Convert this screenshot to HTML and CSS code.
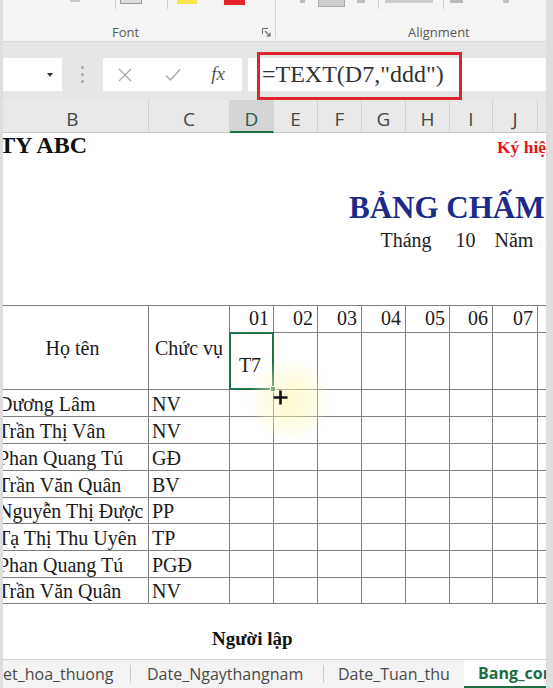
FILE: index.html
```html
<!DOCTYPE html>
<html lang="vi">
<head>
<meta charset="utf-8">
<title>Bang cham cong</title>
<link rel="stylesheet" href="styles.css">
</head>
<body>
<div class="window">
  <div class="ribbon">
    <div class="group font-group">
      <div class="icons">
        <span class="ic ic-a"></span>
        <span class="vsep vs-1"></span>
        <span class="ic ic-box"></span>
        <span class="vsep vs-2"></span>
        <span class="ic ic-yellow"></span>
        <span class="ic ic-red"></span>
      </div>
      <div class="glabel">
        <span class="lbl lbl-font">Font</span>
        <svg class="launcher" width="9" height="9" viewBox="0 0 9 9"><path d="M0.5 6V0.5H6" fill="none" stroke="#6a6a6a" stroke-width="1"/><path d="M3 3L8 8M8 4.5V8H4.5" fill="none" stroke="#6a6a6a" stroke-width="1.1"/></svg>
      </div>
    </div>
    <div class="rsep"></div>
    <div class="group align-group">
      <div class="icons">
        <span class="ic ic-s1"></span>
        <span class="ic ic-pressed"></span>
        <span class="ic ic-s2"></span>
        <span class="vsep vs-3"></span>
        <span class="ic ic-bar"></span>
        <span class="vsep vs-4"></span>
        <span class="ic ic-s3"></span>
        <span class="ic ic-s4"></span>
      </div>
      <div class="glabel">
        <span class="lbl lbl-align">Alignment</span>
      </div>
    </div>
  </div>

  <div class="fbar">
    <div class="namebox"><span class="caret"></span></div>
    <div class="dots"><i></i><i></i><i></i></div>
    <div class="fbtns">
      <span class="fb fb-x"><svg width="14" height="14" viewBox="0 0 14 14"><path d="M1 1L13 13M13 1L1 13" stroke="#a9a9a9" stroke-width="1.3"/></svg></span>
      <span class="fb fb-ok"><svg width="16" height="14" viewBox="0 0 16 14"><path d="M1 7.5L5.5 12L15 1.5" fill="none" stroke="#a9a9a9" stroke-width="1.3"/></svg></span>
      <span class="fb fb-fx">fx</span>
    </div>
    <div class="finput">=TEXT(D7,"ddd")</div>
  </div>

  <div class="colhdr">
    <div class="ch">B</div>
    <div class="ch">C</div>
    <div class="ch ch-sel">D</div>
    <div class="ch">E</div>
    <div class="ch">F</div>
    <div class="ch">G</div>
    <div class="ch">H</div>
    <div class="ch">I</div>
    <div class="ch">J</div>
    <div class="ch">K</div>
  </div>

  <div class="sheet">
    <div class="row r1">
      <div class="company"><span>CÔNG TY ABC</span></div>
      <div class="kyhieu">Ký hiệu chấm công</div>
    </div>
    <div class="r2">BẢNG CHẤM CÔNG</div>
    <div class="row r3">
      <div class="thang">Tháng</div>
      <div class="month">10</div>
      <div class="nam">Năm</div>
    </div>

    <div class="tbl">
      <div class="c hname">Họ tên</div>
      <div class="c hpos">Chức vụ</div>
      <div class="c num">01</div>
      <div class="c num">02</div>
      <div class="c num">03</div>
      <div class="c num">04</div>
      <div class="c num">05</div>
      <div class="c num">06</div>
      <div class="c num">07</div>
      <div class="c num">08</div>
      <div class="c day">T7<span class="sel"><span class="handle"></span></span></div>
      <div class="c"></div><div class="c"></div><div class="c"></div><div class="c"></div><div class="c"></div><div class="c"></div><div class="c"></div>

      <div class="c name">Dương Lâm</div><div class="c pos">NV</div>
      <div class="c"></div><div class="c"></div><div class="c"></div><div class="c"></div><div class="c"></div><div class="c"></div><div class="c"></div><div class="c"></div>

      <div class="c name">Trần Thị Vân</div><div class="c pos">NV</div>
      <div class="c"></div><div class="c"></div><div class="c"></div><div class="c"></div><div class="c"></div><div class="c"></div><div class="c"></div><div class="c"></div>

      <div class="c name">Phan Quang Tú</div><div class="c pos">GĐ</div>
      <div class="c"></div><div class="c"></div><div class="c"></div><div class="c"></div><div class="c"></div><div class="c"></div><div class="c"></div><div class="c"></div>

      <div class="c name">Trần Văn Quân</div><div class="c pos">BV</div>
      <div class="c"></div><div class="c"></div><div class="c"></div><div class="c"></div><div class="c"></div><div class="c"></div><div class="c"></div><div class="c"></div>

      <div class="c name">Nguyễn Thị Được</div><div class="c pos">PP</div>
      <div class="c"></div><div class="c"></div><div class="c"></div><div class="c"></div><div class="c"></div><div class="c"></div><div class="c"></div><div class="c"></div>

      <div class="c name">Tạ Thị Thu Uyên</div><div class="c pos">TP</div>
      <div class="c"></div><div class="c"></div><div class="c"></div><div class="c"></div><div class="c"></div><div class="c"></div><div class="c"></div><div class="c"></div>

      <div class="c name">Phan Quang Tú</div><div class="c pos">PGĐ</div>
      <div class="c"></div><div class="c"></div><div class="c"></div><div class="c"></div><div class="c"></div><div class="c"></div><div class="c"></div><div class="c"></div>

      <div class="c name">Trần Văn Quân</div><div class="c pos">NV</div>
      <div class="c"></div><div class="c"></div><div class="c"></div><div class="c"></div><div class="c"></div><div class="c"></div><div class="c"></div><div class="c"></div>
    </div>

    <div class="sign">Người lập</div>
  </div>

  <div class="tabs">
    <div class="tab t1">et_hoa_thuong</div>
    <div class="tsep"></div>
    <div class="tab t2">Date_Ngaythangnam</div>
    <div class="tsep"></div>
    <div class="tab t3">Date_Tuan_thu</div>
    <div class="tab active">Bang_cong</div>
  </div>

  <div class="annot"></div>
  <div class="glow"></div>
  <svg class="cursor" width="15" height="15" viewBox="0 0 15 15"><path d="M6.2 0.5H8.8V6.2H14.5V8.8H8.8V14.5H6.2V8.8H0.5V6.2H6.2Z" fill="#111"/></svg>
</div>
</body>
</html>
```

FILE: styles.css
```css
* { box-sizing: border-box; margin: 0; padding: 0; }

body {
  width: 553px;
  height: 688px;
  overflow: hidden;
  background: #dedede;
  font-family: "Liberation Serif", "Times New Roman", serif;
}

.window {
  position: relative;
  margin-left: 3px;
  width: 543px;
  height: 688px;
  overflow: hidden;
  background: #fff;
  display: flex;
  flex-direction: column;
}

/* ---------- ribbon ---------- */
.ribbon {
  height: 42px;
  flex: none;
  display: flex;
  background: #f4f4f4;
  border-bottom: 1px solid #d9d9d9;
  font-family: "Open Sans", "Noto Sans", sans-serif;
}
.group { position: relative; }
.font-group { width: 272px; }
.align-group { flex: 1; }
.rsep { width: 1px; background: #d3d3d3; margin-bottom: 2px; }

.icons { display: flex; align-items: flex-start; height: 10px; }
.ic { display: block; flex: none; }
.vsep { display: block; flex: none; width: 1px; height: 9px; background: #cfcfcf; }

.ic-a { margin-left: 67px; width: 10px; height: 2px; background: #c9c9c9; }
.vs-1 { margin-left: 35px; }
.ic-box { margin-left: 4px; width: 22px; height: 4px; background: #dcdcdc; border: 1px solid #9c9c9c; border-top: 0; }
.vs-2 { margin-left: 25px; }
.ic-yellow { margin-left: 9px; width: 20px; height: 4px; background: #f4e64b; }
.ic-red { margin-left: 27px; width: 21px; height: 5px; background: #e2262c; }

.ic-s1 { margin-left: 24px; width: 5px; height: 3px; background: #bdbdbd; }
.ic-pressed { margin-left: 13px; width: 27px; height: 7px; background: #cfcfcf; border: 1px solid #a9a9a9; border-top: 0; }
.ic-s2 { margin-left: 12px; width: 8px; height: 3px; background: #bdbdbd; }
.vs-3 { margin-left: 13px; }
.ic-bar { margin-left: 6px; width: 48px; height: 3px; background: #cccccc; }
.vs-4 { margin-left: 10px; }
.ic-s3 { margin-left: 6px; width: 13px; height: 3px; background: #b9b9b9; }
.ic-s4 { margin-left: 40px; width: 6px; height: 3px; background: #c3c3c3; }

.glabel {
  margin-top: 14px;
  height: 16px;
  line-height: 16px;
  display: flex;
  align-items: center;
}
.lbl { font-size: 13px; color: #5a5a5a; white-space: nowrap; }
.lbl-font { margin-left: 109px; }
.launcher { margin-left: 123px; flex: none; }
.lbl-align { margin-left: 132px; }

/* ---------- formula bar ---------- */
.fbar {
  height: 58px;
  flex: none;
  display: flex;
  align-items: flex-start;
  padding-top: 16px;
  background: #e6e6e6;
}
.namebox {
  width: 59px;
  height: 33px;
  background: #fff;
  display: flex;
  align-items: center;
  justify-content: flex-end;
  padding-right: 9px;
}
.caret {
  width: 0; height: 0;
  border-left: 3px solid transparent;
  border-right: 3px solid transparent;
  border-top: 4px solid #333;
}
.dots {
  width: 41px;
  height: 33px;
  padding-left: 19px;
  display: flex;
  flex-direction: column;
  justify-content: center;
  gap: 4px;
}
.dots i { display: block; width: 3px; height: 3px; border-radius: 50%; background: #a8a8a8; }
.fbtns {
  width: 139px;
  height: 33px;
  background: #fff;
  display: flex;
  align-items: center;
}
.fb { display: flex; justify-content: center; align-items: center; height: 33px; }
.fb-x { width: 44px; }
.fb-ok { width: 52px; }
.fb-fx {
  width: 38px;
  font-family: "Liberation Serif", serif;
  font-style: italic;
  font-size: 19px;
  color: #555;
  padding-bottom: 2px;
}
.finput {
  margin-left: 6px;
  flex: 1;
  height: 33px;
  background: #fff;
  padding-left: 14px;
  font-family: "Liberation Serif", serif;
  font-size: 24px;
  line-height: 33px;
  color: #333;
  white-space: nowrap;
}

/* ---------- column header ---------- */
.colhdr, .row, .tbl {
  display: grid;
  grid-template-columns: 152px 81px 44px 44px 44px 44px 44px 43px 45px 44px;
  margin-left: -6px;
}
.colhdr {
  height: 33px;
  flex: none;
  background: #e9e9e9;
  font-family: "Open Sans", "Noto Sans", sans-serif;
  font-size: 19px;
  color: #454545;
}
.ch {
  text-align: center;
  line-height: 24px;
  padding-top: 7px;
  border-right: 1px solid #d2d2d2;
  border-bottom: 1px solid #c6c6c6;
}
.ch-sel {
  background: #d5d5d5;
  color: #2d5b45;
  border-bottom: 2px solid #217346;
}

/* ---------- sheet ---------- */
.sheet {
  flex: 1;
  background: #fff;
  color: #111;
}
.r1 { height: 30px; align-items: start; }
.company {
  grid-column: 1;
  display: flex;
  justify-content: flex-end;
  padding-right: 62px;
  font-weight: bold;
  font-size: 24px;
  line-height: 24px;
  white-space: nowrap;
}
.company span { flex: none; }
.kyhieu {
  grid-column: 9;
  padding-left: 4px;
  font-weight: bold;
  font-size: 17.5px;
  line-height: 28px;
  color: #e4141e;
  white-space: nowrap;
}
.r2 {
  padding-top: 25px;
  padding-left: 346px;
  height: 65px;
  font-weight: bold;
  font-size: 31px;
  line-height: 40px;
  color: #1c2a88;
  white-space: nowrap;
}
.r3 {
  height: 24px;
  font-size: 20px;
  line-height: 24px;
  color: #222;
  white-space: nowrap;
}
.thang { grid-column: 6 / span 2; text-align: center; }
.month { grid-column: 8; text-align: center; padding-right: 12px; }
.nam { grid-column: 9; text-align: center; padding-right: 3px; }

/* ---------- table ---------- */
.tbl {
  margin-top: 53px;
  grid-template-rows: 27px 57px 27px 27px 27px 27px 26px 27px 27px 26px;
  border-top: 1px solid #7f7f7f;
  font-size: 20px;
  line-height: 20px;
  color: #1a1a1a;
}
.c {
  position: relative;
  border-right: 1px solid #7f7f7f;
  border-bottom: 1px solid #7f7f7f;
  display: flex;
  align-items: flex-end;
  padding-bottom: 2px;
  white-space: nowrap;
}
.hname, .hpos {
  grid-row: span 2;
  align-items: center;
  justify-content: center;
  padding-bottom: 0;
}
.num { justify-content: flex-end; padding-right: 4px; padding-bottom: 4px; }
.day {
  align-items: center;
  justify-content: center;
  padding-top: 8px;
  padding-bottom: 0;
  padding-right: 3px;
}
.sel {
  position: absolute;
  left: -1px;
  top: -1px;
  width: 45px;
  height: 58px;
  border: 2px solid #217346;
  z-index: 2;
}
.handle {
  position: absolute;
  right: -4px;
  bottom: -4px;
  width: 6px;
  height: 6px;
  background: #217346;
  border: 1px solid #fff;
}
.name { padding-left: 1px; }
.pos { padding-left: 3px; }

.sign {
  padding-top: 23px;
  padding-left: 209px;
  font-weight: bold;
  font-size: 19px;
  line-height: 24px;
  color: #111;
}

/* ---------- sheet tabs ---------- */
.tabs {
  height: 29px;
  flex: none;
  display: flex;
  background: #f3f3f3;
  border-top: 1px solid #d3d3d3;
  font-family: "Open Sans", "Noto Sans", sans-serif;
  font-size: 16px;
  line-height: 28px;
  color: #4a4a4a;
  white-space: nowrap;
}
.tab { flex: none; overflow: hidden; }
.t1 { width: 127px; }
.t2 { width: 192px; padding-left: 16px; }
.t3 { width: 140px; padding-left: 14px; }
.tsep { flex: none; width: 1px; height: 18px; margin-top: 5px; background: #c9c9c9; }
.active {
  flex: 1;
  background: #fff;
  padding-left: 14px;
  font-weight: bold;
  color: #1d6b41;
  border-bottom: 2px solid #1d6b41;
  line-height: 26px;
}

/* ---------- overlays ---------- */
.annot {
  position: absolute;
  left: 254px;
  top: 52px;
  width: 205px;
  height: 48px;
  border: 3px solid #e0242b;
  z-index: 5;
}
.glow {
  position: absolute;
  left: 245px;
  top: 358px;
  width: 84px;
  height: 84px;
  border-radius: 50%;
  background: radial-gradient(circle, rgba(255, 247, 170, 0.6) 0%, rgba(255, 249, 195, 0.35) 45%, rgba(255, 255, 255, 0) 70%);
  z-index: 3;
}
.cursor {
  position: absolute;
  left: 270px;
  top: 390px;
  z-index: 4;
}
```
